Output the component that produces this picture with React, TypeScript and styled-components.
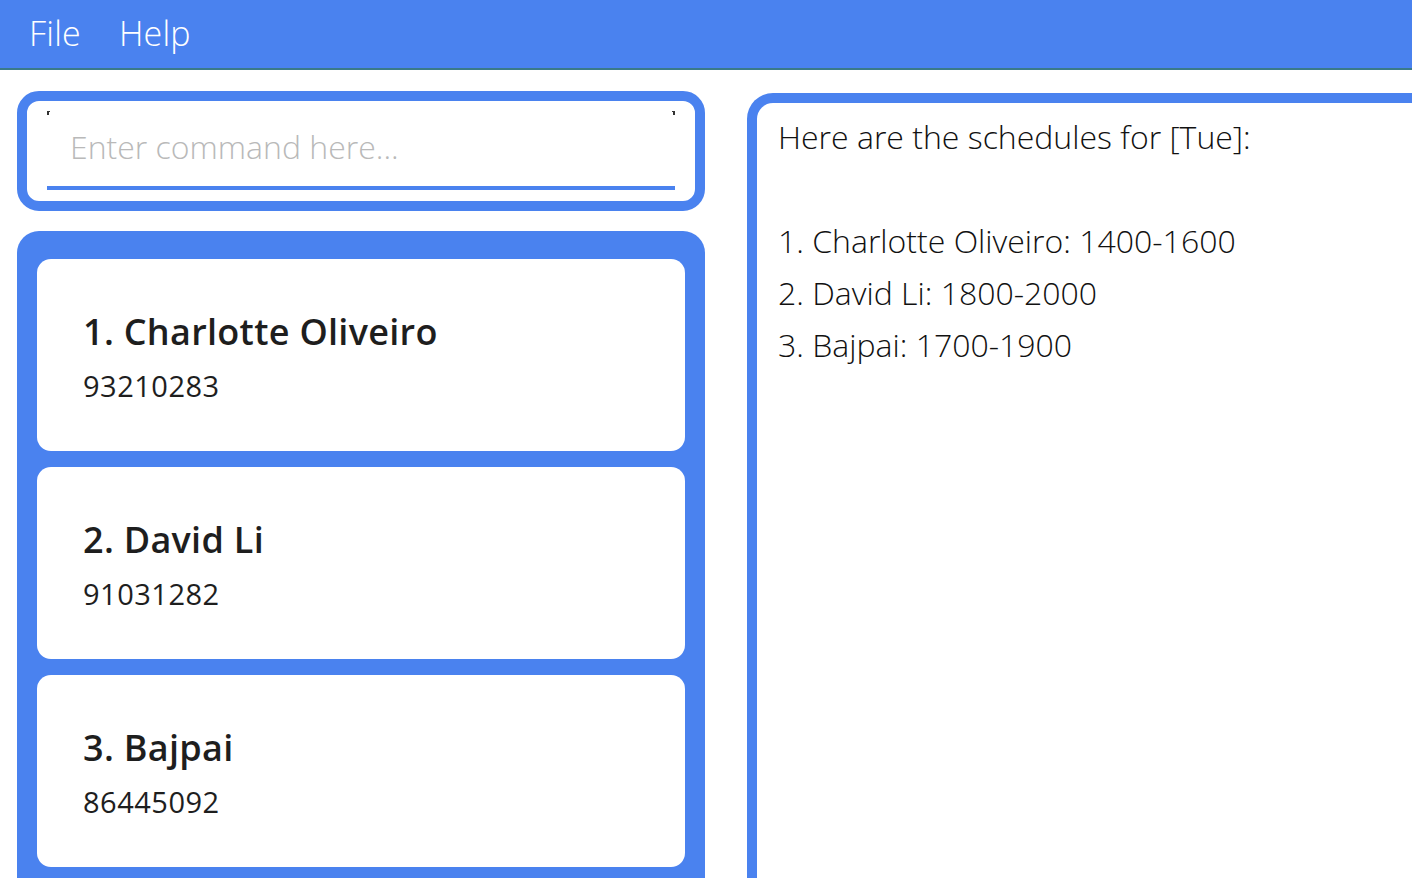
import React from "react";
import styled, { createGlobalStyle } from "styled-components";

const GlobalStyle = createGlobalStyle`
  html, body {
    margin: 0;
    padding: 0;
    background: #ffffff;
    overflow: hidden;
  }
  body {
    font-family: "Open Sans", "Noto Sans", sans-serif;
  }
  * { box-sizing: border-box; }
`;

const BLUE = "#4a82ef";

const Page = styled.div`
  width: 1412px;
  height: 878px;
  display: flex;
  flex-direction: column;
  overflow: hidden;
`;

const MenuBar = styled.div`
  height: 70px;
  flex: none;
  background: ${BLUE};
  border-bottom: 2px solid #3a7a88;
  display: flex;
  align-items: center;
  padding-left: 29px;
  gap: 38px;
  padding-bottom: 2px;
`;

const MenuItem = styled.span`
  color: #ffffff;
  font-family: "Open Sans", sans-serif;
  font-weight: 300;
  font-size: 34px;
  letter-spacing: 0.2px;
`;

const Body = styled.div`
  flex: 1;
  display: flex;
  gap: 42px;
  padding: 21px 0 0 17px;
  min-height: 0;
`;

const LeftColumn = styled.div`
  width: 688px;
  flex: none;
  display: flex;
  flex-direction: column;
  gap: 20px;
`;

const CommandBox = styled.div`
  height: 120px;
  border: 10px solid ${BLUE};
  border-radius: 22px;
  background: #fff;
  padding: 10px 20px 11px 20px;
`;

const CommandField = styled.div`
  position: relative;
  height: 79px;
  border-bottom: 4px solid ${BLUE};
  display: flex;
  align-items: center;
  padding-left: 23px;
  padding-bottom: 4px;
`;

const CornerMark = styled.span<{ $side: "left" | "right" }>`
  position: absolute;
  top: 0;
  ${(p) => (p.$side === "left" ? "left: 0;" : "right: 0;")}
  width: 3px;
  height: 4px;
  border-top: 1px solid #333;
  ${(p) =>
    p.$side === "left"
      ? "border-left: 2px solid #333;"
      : "border-right: 2px solid #333;"}
`;

const Placeholder = styled.span`
  color: #b9b9b9;
  font-family: "Open Sans", sans-serif;
  font-weight: 300;
  font-size: 32px;
  letter-spacing: 0px;
`;

const ListPanel = styled.div`
  flex: 1;
  background: ${BLUE};
  border-radius: 22px 22px 0 0;
  padding: 28px 20px 0 20px;
  display: flex;
  flex-direction: column;
  gap: 16px;
  overflow: hidden;
`;

const Card = styled.div`
  height: 192px;
  flex: none;
  background: #ffffff;
  border-radius: 14px;
  padding: 50px 0 0 46px;
  display: flex;
  flex-direction: column;
  gap: 12px;
`;

const CardName = styled.div`
  font-family: "Open Sans", sans-serif;
  font-weight: 600;
  font-size: 36px;
  line-height: 46px;
  color: #1e1e1e;
  letter-spacing: 0.3px;
`;

const CardPhone = styled.div`
  font-family: "Open Sans", sans-serif;
  font-weight: 400;
  font-size: 29px;
  line-height: 38px;
  color: #1e1e1e;
  letter-spacing: 0.5px;
`;

const ResultPanel = styled.div`
  flex: 1;
  margin-top: 2px;
  margin-right: -40px;
  border: 10px solid ${BLUE};
  border-bottom: none;
  border-radius: 26px 26px 0 0;
  background: #fff;
  padding: 8px 0 0 21px;
`;

const ResultText = styled.div`
  white-space: pre-wrap;
  font-family: "Open Sans", sans-serif;
  font-weight: 300;
  font-size: 32px;
  line-height: 52px;
  color: #111;
  letter-spacing: 0px;
`;

const persons = [
  { name: "1. Charlotte Oliveiro", phone: "93210283" },
  { name: "2. David Li", phone: "91031282" },
  { name: "3. Bajpai", phone: "86445092" },
];

const result =
  "Here are the schedules for [Tue]:\n\n1. Charlotte Oliveiro: 1400-1600\n2. David Li: 1800-2000\n3. Bajpai: 1700-1900";

export default function App() {
  return (
    <>
      <GlobalStyle />
      <Page>
        <MenuBar>
          <MenuItem>File</MenuItem>
          <MenuItem>Help</MenuItem>
        </MenuBar>
        <Body>
          <LeftColumn>
            <CommandBox>
              <CommandField>
                <CornerMark $side="left" />
                <CornerMark $side="right" />
                <Placeholder>Enter command here...</Placeholder>
              </CommandField>
            </CommandBox>
            <ListPanel>
              {persons.map((p) => (
                <Card key={p.name}>
                  <CardName>{p.name}</CardName>
                  <CardPhone>{p.phone}</CardPhone>
                </Card>
              ))}
            </ListPanel>
          </LeftColumn>
          <ResultPanel>
            <ResultText>{result}</ResultText>
          </ResultPanel>
        </Body>
      </Page>
    </>
  );
}
